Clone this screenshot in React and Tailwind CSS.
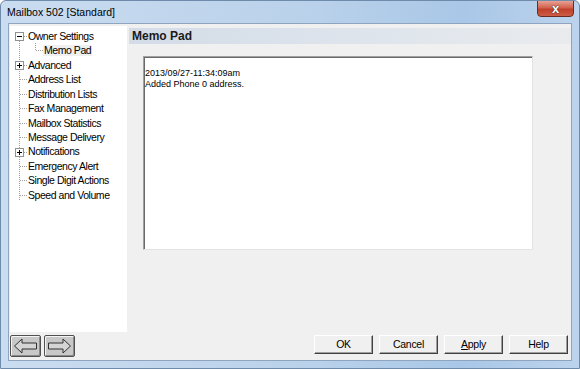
import React from "react";

const items = [
  { label: "Owner Settings", level: 0, box: "minus" },
  { label: "Memo Pad", level: 1, selected: true },
  { label: "Advanced", level: 0, box: "plus" },
  { label: "Address List", level: 0 },
  { label: "Distribution Lists", level: 0 },
  { label: "Fax Management", level: 0 },
  { label: "Mailbox Statistics", level: 0 },
  { label: "Message Delivery", level: 0 },
  { label: "Notifications", level: 0, box: "plus" },
  { label: "Emergency Alert", level: 0 },
  { label: "Single Digit Actions", level: 0 },
  { label: "Speed and Volume", level: 0 },
];

function Box({ type }) {
  return (
    <svg width="9" height="9" viewBox="0 0 9 9" className="absolute left-[5px] top-[3px]">
      <rect x="0.5" y="0.5" width="8" height="8" fill="#fff" stroke="#919191" />
      <line x1="2" y1="4.5" x2="7" y2="4.5" stroke="#000" />
      {type === "plus" && <line x1="4.5" y1="2" x2="4.5" y2="7" stroke="#000" />}
    </svg>
  );
}

function Tree() {
  return (
    <div className="relative w-[117px] h-[306px] bg-white pt-[3px]">
      <div className="absolute left-[9px] top-[12px] h-[162px] border-l border-dotted border-[#a0a0a0]" />
      <div className="absolute left-[25px] top-[17px] h-[7px] border-l border-dotted border-[#a0a0a0]" />
      {items.map((it, i) => (
        <div key={i} className="relative h-[14.45px] flex items-center">
          {it.level === 0 ? (
            <>
              <div className="absolute left-[10px] top-[7px] w-[7px] border-t border-dotted border-[#a0a0a0]" />
              {it.box && <Box type={it.box} />}
              <span className="ml-[18px] text-[10.5px] tracking-[-0.45px] leading-none text-black">{it.label}</span>
            </>
          ) : (
            <>
              <div className="absolute left-[26px] top-[7px] w-[7px] border-t border-dotted border-[#a0a0a0]" />
              <span className="ml-[33px] px-[1px] text-[10.5px] tracking-[-0.45px] leading-none text-black bg-[#f0f0f0]">{it.label}</span>
            </>
          )}
        </div>
      ))}
    </div>
  );
}

function Btn({ children }) {
  return (
    <div className="w-[59px] h-[19px] bg-[#f0f0f0] border border-t-white border-l-white border-r-[#404040] border-b-[#404040] shadow-[inset_-1px_-1px_0_#a0a0a0] flex items-center justify-center text-[10.5px] tracking-[-0.3px] text-black">
      {children}
    </div>
  );
}

function Arrow({ dir }) {
  return (
    <div className="w-[31px] h-[22px] bg-[#c8c8c8] border border-[#505050] rounded-[2px] shadow-[inset_1px_1px_0_#f4f4f4,inset_-1px_-1px_0_#8a8a8a] flex items-center justify-center">
      <svg width="25" height="16" viewBox="0 0 25 16">
        {dir === "left" ? (
          <path d="M1.5 8 L9 1 L9 5 L23.5 5 L23.5 11 L9 11 L9 15 Z" fill="#d4d4d4" stroke="#303030" strokeWidth="1" />
        ) : (
          <path d="M23.5 8 L16 1 L16 5 L1.5 5 L1.5 11 L16 11 L16 15 Z" fill="#d4d4d4" stroke="#303030" strokeWidth="1" />
        )}
      </svg>
    </div>
  );
}

export default function App() {
  return (
    <div
      className="w-[580px] h-[369px] bg-[linear-gradient(90deg,#cadcf0_0%,#b9d1ea_55%,#a9c7e7_80%,#bcd3ec_100%)] border border-[#6f8bab] rounded-t-[6px] flex flex-col overflow-hidden"
      style={{ fontFamily: '"Liberation Sans", Arial, sans-serif' }}
    >
      <div className="h-[22px] flex items-start justify-between pl-[6px] pr-[5px]">
        <div className="text-[10.5px] text-black mt-[4px]">Mailbox 502 [Standard]</div>
        <div className="w-[37px] h-[17px] -mt-[1px] rounded-b-[4px] border border-[#6b2a22] bg-[linear-gradient(180deg,#e7a293_0%,#d1624e_45%,#c0402b_55%,#cc5d45_100%)] flex items-center justify-center">
          <span className="text-white text-[13px] font-bold leading-none [text-shadow:0_0_1px_#402020,0_0_1px_#402020]">x</span>
        </div>
      </div>
      <div className="mx-[7px] mb-[7px] flex-1 bg-[#f0f0f0] border border-[#8ea4bf] flex flex-col">
        <div className="flex flex-1 pt-[2px] pl-[1px]">
          <Tree />
          <div className="flex-1 pl-[2px] pt-[2px] flex flex-col">
            <div className="h-[16px] bg-[linear-gradient(90deg,#d3dce7_0%,#dde4ec_50%,#e9ebee_100%)] flex items-center pl-[3px]">
              <span className="text-[12px] font-bold text-[#1a1a1a]">Memo Pad</span>
            </div>
            <div className="ml-[14px] mt-[12px] w-[390px] h-[194px] bg-white border border-t-[#a0a0a0] border-l-[#a0a0a0] border-r-[#e3e3e3] border-b-[#e3e3e3] shadow-[inset_1px_1px_0_#696969]">
              <div className="pl-[1px] pt-[11px] text-[9px] leading-[11px] text-black">
                <div>2013/09/27-11:34:09am</div>
                <div>Added Phone 0 address.</div>
              </div>
            </div>
          </div>
        </div>
        <div className="h-[27px] flex items-start pl-[1px] pr-[3px]">
          <div className="flex gap-[3px] pt-[2px]">
            <Arrow dir="left" />
            <Arrow dir="right" />
          </div>
          <div className="ml-auto flex gap-[6px] pt-[2px]">
            <Btn>OK</Btn>
            <Btn>Cancel</Btn>
            <Btn><span><u>A</u>pply</span></Btn>
            <Btn>Help</Btn>
          </div>
        </div>
      </div>
    </div>
  );
}
